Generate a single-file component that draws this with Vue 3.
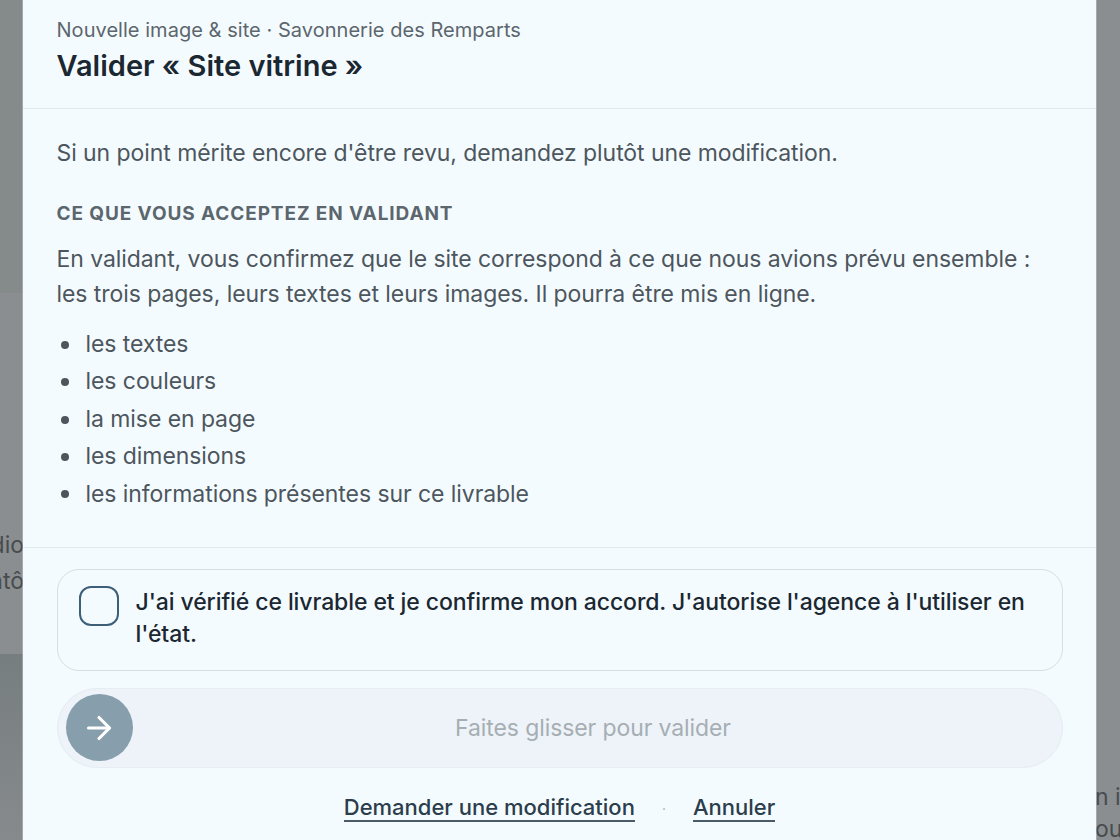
<script setup>
const items = ['les textes', 'les couleurs', 'la mise en page', 'les dimensions', 'les informations présentes sur ce livrable']
</script>

<template>
  <div class="page">
    <div class="backdrop">
      <div class="bg-col">
        <div class="bg-top"></div>
        <div class="bg-mid">
          <span class="bg-text left one">dio</span>
          <span class="bg-text left two">ntô</span>
        </div>
        <div class="bg-low"></div>
      </div>
      <span class="bg-text right one">n ic</span>
      <span class="bg-text right two">ouc</span>
    </div>
    <section class="dialog">
      <header class="head">
        <p class="eyebrow">Nouvelle image &amp; site · Savonnerie des Remparts</p>
        <h1 class="title">Valider « Site vitrine »</h1>
      </header>
      <div class="body">
        <p class="lead">Si un point mérite encore d'être revu, demandez plutôt une modification.</p>
        <h2 class="label">CE QUE VOUS ACCEPTEZ EN VALIDANT</h2>
        <p class="para">En validant, vous confirmez que le site correspond à ce que nous avions prévu ensemble : les trois pages, leurs textes et leurs images. Il pourra être mis en ligne.</p>
        <ul class="list">
          <li v-for="item in items" :key="item">{{ item }}</li>
        </ul>
      </div>
      <footer class="foot">
        <label class="check">
          <span class="box"></span>
          <span class="check-text">J'ai vérifié ce livrable et je confirme mon accord. J'autorise l'agence à l'utiliser en l'état.</span>
        </label>
        <div class="slider">
          <span class="knob">
            <svg width="36" height="36" viewBox="0 0 24 24" fill="none" stroke="#fff" stroke-width="2.1" stroke-linecap="round" stroke-linejoin="round">
              <path d="M5 12h14" />
              <path d="m12 5 7 7-7 7" />
            </svg>
          </span>
          <span class="slider-text">Faites glisser pour valider</span>
        </div>
        <div class="actions">
          <a class="link">Demander une modification</a>
          <span class="dot">·</span>
          <a class="link">Annuler</a>
        </div>
      </footer>
    </section>
  </div>
</template>

<style>
html, body { margin: 0; background: #8a8e90; overflow: hidden; }
</style>

<style scoped>
.page {
  position: relative;
  width: 1120px;
  height: 840px;
  overflow: hidden;
  font-family: "Inter", "Liberation Sans", sans-serif;
  display: flex;
  justify-content: center;
}
.backdrop {
  position: absolute;
  inset: 0;
  background: #8a8e90;
}
.bg-col { width: 24px; height: 840px; display: flex; flex-direction: column; }
.bg-top { height: 293px; background: #858a8b; }
.bg-mid { position: relative; height: 361px; background: #8b8e90; }
.bg-low { flex: 1; background: linear-gradient(180deg, #777e80, #868a8c); }
.bg-text { position: absolute; font-size: 23px; color: #484c4e; line-height: 36px; white-space: nowrap; }
.left { right: 0; }
.left.one { top: 234px; }
.left.two { top: 270px; }
.right { left: 1095px; }
.right.one { top: 779px; }
.right.two { top: 811px; }
.dialog {
  position: relative;
  width: 1073px;
  height: 840px;
  margin-left: -1px;
  background: #f4fbff;
  display: flex;
  flex-direction: column;
  box-sizing: border-box;
  box-shadow: 0 0 0 0.5px rgba(214, 222, 228, 0.7);
}
.head {
  padding: 17px 33.5px 0;
  height: 109px;
  box-sizing: border-box;
  border-bottom: 1px solid #e3e9ec;
}
.eyebrow { margin: 0; font-size: 20px; line-height: 26px; letter-spacing: 0.04px; color: #5c666d; }
.title { margin: 4px 0 0; font-size: 29px; line-height: 38px; font-weight: 600; color: #1b2731; }
.body { padding: 26px 33.5px 0; height: 439px; box-sizing: border-box; border-bottom: 1px solid #e3e9ec; }
.lead { margin: 0; font-size: 23px; line-height: 36px; letter-spacing: -0.07px; color: #4d565d; }
.label { margin: 31px 0 0; font-size: 19px; line-height: 24px; font-weight: 700; letter-spacing: 0.9px; color: #5c666d; }
.para { margin: 16px 0 0; font-size: 23px; line-height: 35px; letter-spacing: -0.07px; color: #4d565d; }
.list { margin: 14px 0 0; padding: 0 0 0 4px; list-style: none; font-size: 23px; line-height: 37.4px; letter-spacing: -0.07px; color: #4d565d; }
.list li { display: flex; align-items: center; gap: 17px; }
.list li::before {
  content: "";
  flex: none;
  width: 8px;
  height: 8px;
  border-radius: 50%;
  background: #4d565d;
}
.foot { padding: 20.5px 33.5px 0; display: flex; flex-direction: column; }
.check {
  display: flex;
  gap: 17px;
  box-sizing: border-box;
  height: 102px;
  padding: 16.5px 21px;
  border: 1px solid #d4dfe6;
  border-radius: 22px;
}
.box {
  flex: none;
  box-sizing: border-box;
  width: 40px;
  height: 40px;
  border: 2px solid #3d5f78;
  border-radius: 12px;
}
.check-text { font-size: 23px; line-height: 32px; font-weight: 500; letter-spacing: -0.09px; color: #1b2731; }
.slider {
  position: relative;
  margin-top: 17px;
  box-sizing: border-box;
  height: 80px;
  border: 1px solid #e5ecf2;
  border-radius: 40px;
  background: #edf3f8;
  display: flex;
  align-items: center;
  justify-content: center;
}
.knob {
  position: absolute;
  left: 8px;
  top: 5.5px;
  width: 67px;
  height: 67px;
  border-radius: 50%;
  background: #879eac;
  display: flex;
  align-items: center;
  justify-content: center;
}
.slider-text { font-size: 23px; letter-spacing: -0.1px; color: #a6aeb4; margin-left: 67px; }
.actions { margin-top: 24px; display: flex; justify-content: center; align-items: center; gap: 27px; font-size: 22px; line-height: 34px; }
.link { color: #2c3d4b; font-weight: 500; border-bottom: 2px solid #4a5a67; line-height: 25px; }
.dot { color: #a6aeb4; font-size: 14px; }
</style>
